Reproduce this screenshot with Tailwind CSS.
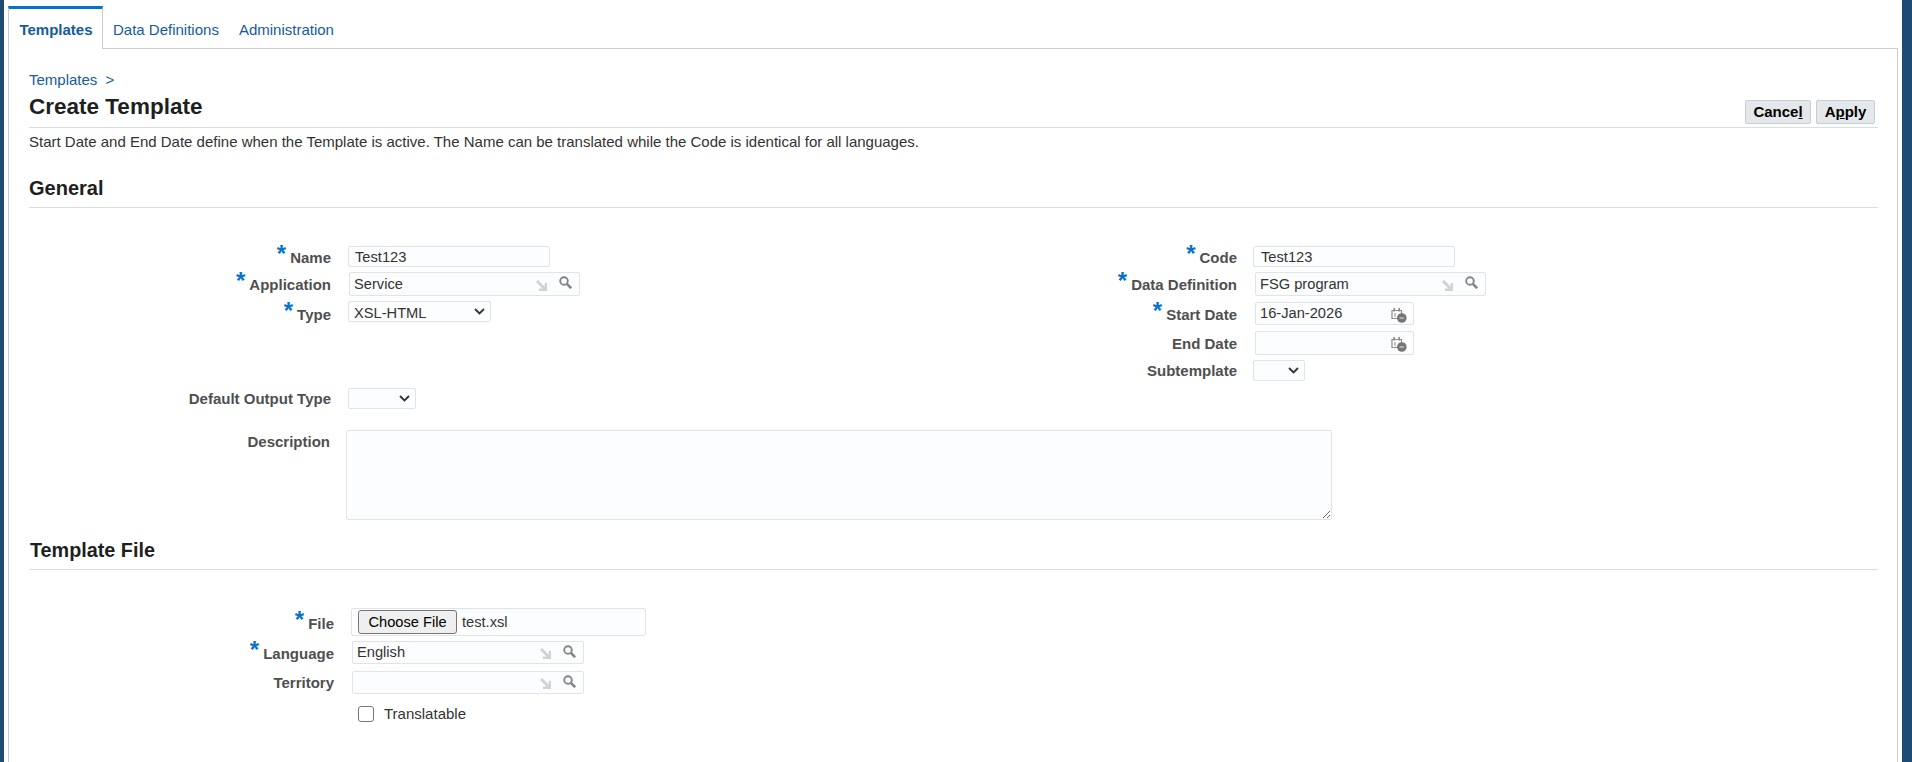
<!doctype html>
<html>
  <head>
    <title>Create Template</title>
    <script src="https://cdn.jsdelivr.net/npm/@tailwindcss/browser@4"></script>
  </head>
  <body class="flex h-[762px] overflow-hidden bg-white font-['Liberation_Sans',Arial,sans-serif] text-[15px] text-[#333]">
    <div class="w-[4px] shrink-0 bg-[#1e4b71]"></div>

    <main class="min-w-0 flex-1 pl-[4px] pr-[4px] pt-[6px]">
      <!-- tabs -->
      <nav class="flex h-[43px] text-[#145c9e]">
        <a class="flex w-[95px] items-center justify-center border-x border-t-[3px] border-x-[#c4ced7] border-t-[#0572ce] pl-[1px] pt-[2px] font-bold">Templates</a>
        <div class="flex flex-1 items-center gap-[20px] border-b border-[#c4ced7] pt-[6px] pl-[10px]">
          <a>Data Definitions</a>
          <a>Administration</a>
        </div>
      </nav>

      <div class="h-[713px] border-x border-[#c4ced7] pl-[20px] pr-[19px]">
        <div class="pt-[22px] leading-[18px] text-[#145c9e]">Templates <span class="ml-[4px]">&gt;</span></div>

        <div class="flex h-[39px] items-end justify-between border-b border-[#d6dfe6] pr-[3px]">
          <h1 class="pb-[6px] text-[22.5px] font-bold leading-[28px] text-[#1f1f1f]">Create Template</h1>
          <div class="mb-[3px] flex gap-[5px] font-bold text-black">
            <button class="h-[24px] w-[66px] rounded-[2px] border border-[#c4ced7] bg-[#e4e8ea]">Cance<u>l</u></button>
            <button class="h-[24px] w-[59px] rounded-[2px] border border-[#c4ced7] bg-[#e4e8ea]">A<u>p</u>ply</button>
          </div>
        </div>

        <p class="pt-[4px] leading-[20px]">Start Date and End Date define when the Template is active. The Name can be translated while the Code is identical for all languages.</p>

        <h2 class="mt-[19px] flex h-[37px] items-center border-b border-[#d6dfe6] pb-[3px] text-[20px] font-bold text-[#1f1f1f]">General</h2>

        <div class="mt-[38px] flex text-[14.67px]">
          <!-- left column -->
          <div class="w-[1008px] shrink-0">
            <div class="flex">
              <label class="flex h-[21px] w-[302px] items-center justify-end pt-[3px] text-[15px] font-bold text-[#4f4f4f]"><span class="mr-[4px] -mt-[9px] text-[24px] leading-none text-[#0572ce]">*</span>Name</label>
              <div class="ml-[17px] flex h-[21px] w-[202px] items-center rounded-[2px] border border-[#dfe4ea] bg-[#fcfdfe] pl-[6px]">Test123</div>
            </div>
            <div class="mt-[5px] flex">
              <label class="flex h-[24px] w-[302px] items-center justify-end pt-[2px] text-[15px] font-bold text-[#4f4f4f]"><span class="mr-[4px] -mt-[9px] text-[24px] leading-none text-[#0572ce]">*</span>Application</label>
              <div class="ml-[18px] flex h-[24px] w-[231px] items-center rounded-[2px] border border-[#dfe4ea] bg-[#fcfdfe] pb-[1px] pl-[4px] pr-[7px]">
                <span class="flex-1">Service</span>
                <svg class="mt-[3px] mr-[12px]" width="11" height="11" viewBox="0 0 11 11" fill="none" stroke="#d2d2d2"><path d="M1 1l8 8" stroke-width="3"/><path d="M9.8 3v6.8H3" stroke-width="2.4"/></svg>
                <svg class="-mt-[2px]" width="13" height="13" viewBox="0 0 13 13" fill="none" stroke="#858585"><circle cx="5" cy="5" r="3.8" stroke-width="1.9"/><path d="M7.8 7.8l4.4 4.4" stroke-width="2.6"/></svg>
              </div>
            </div>
            <div class="mt-[5px] flex">
              <label class="flex h-[21px] w-[302px] items-center justify-end pt-[8px] text-[15px] font-bold text-[#4f4f4f]"><span class="mr-[4px] -mt-[9px] text-[24px] leading-none text-[#0572ce]">*</span>Type</label>
              <div class="relative ml-[17px] h-[21px] w-[143px]">
                <select class="h-full w-full appearance-none rounded-[2px] border border-[#dfe4ea] bg-[#fcfdfe] pl-[5px]"><option>XSL-HTML</option></select>
                <svg class="pointer-events-none absolute right-[6px] top-[7px]" width="11" height="7" viewBox="0 0 11 7" fill="none" stroke="#333" stroke-width="1.8"><path d="M1 1l4.5 4.5L10 1"/></svg>
              </div>
            </div>
            <div class="mt-[66px] flex">
              <label class="flex h-[21px] w-[302px] items-center justify-end pt-[2px] text-[15px] font-bold text-[#4f4f4f]">Default Output Type</label>
              <div class="relative ml-[17px] h-[21px] w-[68px]">
                <select class="h-full w-full appearance-none rounded-[2px] border border-[#dfe4ea] bg-[#fcfdfe]"><option></option></select>
                <svg class="pointer-events-none absolute right-[6px] top-[7px]" width="11" height="7" viewBox="0 0 11 7" fill="none" stroke="#333" stroke-width="1.8"><path d="M1 1l4.5 4.5L10 1"/></svg>
              </div>
            </div>
          </div>

          <!-- right column -->
          <div>
            <div class="flex">
              <label class="flex h-[21px] w-[200px] items-center justify-end pt-[3px] text-[15px] font-bold text-[#4f4f4f]"><span class="mr-[4px] -mt-[9px] text-[24px] leading-none text-[#0572ce]">*</span>Code</label>
              <div class="ml-[16px] flex h-[21px] w-[202px] items-center rounded-[2px] border border-[#dfe4ea] bg-[#fcfdfe] pl-[7px]">Test123</div>
            </div>
            <div class="mt-[5px] flex">
              <label class="flex h-[24px] w-[200px] items-center justify-end pt-[2px] text-[15px] font-bold text-[#4f4f4f]"><span class="mr-[4px] -mt-[9px] text-[24px] leading-none text-[#0572ce]">*</span>Data Definition</label>
              <div class="ml-[18px] flex h-[24px] w-[231px] items-center rounded-[2px] border border-[#dfe4ea] bg-[#fcfdfe] pb-[1px] pl-[4px] pr-[7px]">
                <span class="flex-1">FSG program</span>
                <svg class="mt-[3px] mr-[12px]" width="11" height="11" viewBox="0 0 11 11" fill="none" stroke="#d2d2d2"><path d="M1 1l8 8" stroke-width="3"/><path d="M9.8 3v6.8H3" stroke-width="2.4"/></svg>
                <svg class="-mt-[2px]" width="13" height="13" viewBox="0 0 13 13" fill="none" stroke="#858585"><circle cx="5" cy="5" r="3.8" stroke-width="1.9"/><path d="M7.8 7.8l4.4 4.4" stroke-width="2.6"/></svg>
              </div>
            </div>
            <div class="mt-[6px] flex">
              <label class="flex h-[23px] w-[200px] items-center justify-end pt-[4px] text-[15px] font-bold text-[#4f4f4f]"><span class="mr-[4px] -mt-[9px] text-[24px] leading-none text-[#0572ce]">*</span>Start Date</label>
              <div class="ml-[18px] flex h-[23px] w-[159px] items-center rounded-[2px] border border-[#dfe4ea] bg-[#fcfdfe] pb-[1px] pl-[4px] pr-[6px]">
                <span class="flex-1">16-Jan-2026</span>
                <svg class="mt-[3px]" width="16" height="16" viewBox="0 0 16 16"><path d="M1 3.5h9.5v8H1z" fill="#fff" stroke="#8a8a8a" stroke-width="1.2"/><path d="M3.2 1v3.5M8.2 1v3.5" stroke="#8a8a8a" stroke-width="1.6"/><path d="M4 6v4" stroke="#8a8a8a"/><circle cx="10.8" cy="11" r="4.8" fill="#767676"/><path d="M8.6 11h4.2" stroke="#ddd" stroke-width="1.1"/></svg>
              </div>
            </div>
            <div class="mt-[6px] flex">
              <label class="flex h-[24px] w-[200px] items-center justify-end pt-[3px] text-[15px] font-bold text-[#4f4f4f]">End Date</label>
              <div class="ml-[18px] flex h-[24px] w-[159px] items-center justify-end rounded-[2px] border border-[#dfe4ea] bg-[#fcfdfe] pb-[1px] pr-[6px]">
                <svg class="mt-[3px]" width="16" height="16" viewBox="0 0 16 16"><path d="M1 3.5h9.5v8H1z" fill="#fff" stroke="#8a8a8a" stroke-width="1.2"/><path d="M3.2 1v3.5M8.2 1v3.5" stroke="#8a8a8a" stroke-width="1.6"/><path d="M4 6v4" stroke="#8a8a8a"/><circle cx="10.8" cy="11" r="4.8" fill="#767676"/><path d="M8.6 11h4.2" stroke="#ddd" stroke-width="1.1"/></svg>
              </div>
            </div>
            <div class="mt-[5px] flex">
              <label class="flex h-[21px] w-[200px] items-center justify-end pt-[2px] text-[15px] font-bold text-[#4f4f4f]">Subtemplate</label>
              <div class="relative ml-[16px] h-[21px] w-[52px]">
                <select class="h-full w-full appearance-none rounded-[2px] border border-[#dfe4ea] bg-[#fcfdfe]"><option></option></select>
                <svg class="pointer-events-none absolute right-[6px] top-[7px]" width="11" height="7" viewBox="0 0 11 7" fill="none" stroke="#333" stroke-width="1.8"><path d="M1 1l4.5 4.5L10 1"/></svg>
              </div>
            </div>
          </div>
        </div>

        <div class="mt-[21px] flex">
          <label class="w-[301px] pt-[2px] text-right font-bold leading-[20px] text-[#4f4f4f]">Description</label>
          <textarea class="ml-[16px] h-[90px] w-[986px] rounded-[2px] border border-[#dfe4ea] bg-[#fcfdfe]"></textarea>
        </div>

        <h2 class="ml-[1px] mt-[20px] flex h-[30px] items-center border-b border-[#d6dfe6] pb-[8px] text-[19.8px] font-bold text-[#1f1f1f]">Template File</h2>

        <div class="mt-[38px] flex text-[14.67px]">
          <label class="flex h-[28px] w-[305px] items-center justify-end pt-[5px] text-[15px] font-bold text-[#4f4f4f]"><span class="mr-[4px] -mt-[9px] text-[24px] leading-none text-[#0572ce]">*</span>File</label>
          <div class="ml-[17px] flex h-[28px] w-[295px] items-center rounded-[2px] border border-[#dfe4ea] bg-[#fcfdfe] pl-[6px]">
            <button class="h-[24px] w-[99px] rounded-[3px] border border-[#767676] bg-[#efefef] text-black">Choose File</button>
            <span class="ml-[5px] pb-[1px]">test.xsl</span>
          </div>
        </div>
        <div class="mt-[5px] flex text-[14.67px]">
          <label class="flex h-[23px] w-[305px] items-center justify-end pt-[3px] text-[15px] font-bold text-[#4f4f4f]"><span class="mr-[4px] -mt-[9px] text-[24px] leading-none text-[#0572ce]">*</span>Language</label>
          <div class="ml-[18px] flex h-[23px] w-[232px] items-center rounded-[2px] border border-[#dfe4ea] bg-[#fcfdfe] pb-[1px] pl-[4px] pr-[7px]">
            <span class="flex-1">English</span>
            <svg class="mt-[3px] mr-[12px]" width="11" height="11" viewBox="0 0 11 11" fill="none" stroke="#d2d2d2"><path d="M1 1l8 8" stroke-width="3"/><path d="M9.8 3v6.8H3" stroke-width="2.4"/></svg>
            <svg class="-mt-[2px]" width="13" height="13" viewBox="0 0 13 13" fill="none" stroke="#858585"><circle cx="5" cy="5" r="3.8" stroke-width="1.9"/><path d="M7.8 7.8l4.4 4.4" stroke-width="2.6"/></svg>
          </div>
        </div>
        <div class="mt-[7px] flex">
          <label class="flex h-[23px] w-[305px] items-center justify-end pt-[1px] font-bold text-[#4f4f4f]">Territory</label>
          <div class="ml-[18px] flex h-[23px] w-[232px] items-center justify-end rounded-[2px] border border-[#dfe4ea] bg-[#fcfdfe] pb-[1px] pr-[7px]">
            <svg class="mt-[3px] mr-[12px]" width="11" height="11" viewBox="0 0 11 11" fill="none" stroke="#d2d2d2"><path d="M1 1l8 8" stroke-width="3"/><path d="M9.8 3v6.8H3" stroke-width="2.4"/></svg>
            <svg class="-mt-[2px]" width="13" height="13" viewBox="0 0 13 13" fill="none" stroke="#858585"><circle cx="5" cy="5" r="3.8" stroke-width="1.9"/><path d="M7.8 7.8l4.4 4.4" stroke-width="2.6"/></svg>
          </div>
        </div>
        <label class="ml-[329px] mt-[11px] flex items-center">
          <input type="checkbox" class="h-[16px] w-[16px] appearance-none rounded-[3px] border border-[#767676] bg-white" />
          <span class="ml-[10px] leading-[18px]">Translatable</span>
        </label>
      </div>
    </main>

    <div class="w-[10px] shrink-0 bg-[#1e4b71]"></div>
  </body>
</html>
